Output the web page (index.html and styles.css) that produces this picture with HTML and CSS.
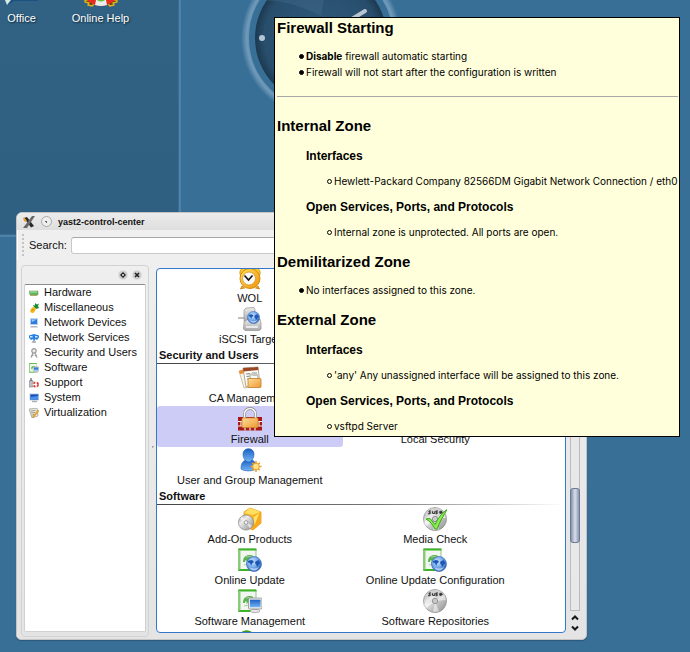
FILE: index.html
```html
<!DOCTYPE html>
<html lang="en">
<head>
<meta charset="utf-8">
<title>yast2-control-center</title>
<link rel="stylesheet" href="styles.css">
</head>
<body>
<svg class="defs" aria-hidden="true">
  <defs>
    <linearGradient id="gold" x1="0" y1="0" x2="1" y2="1"><stop offset="0" stop-color="#ffe25a"/><stop offset="1" stop-color="#f0900c"/></linearGradient>
    <linearGradient id="lockg" x1="0" y1="0" x2="1" y2="1"><stop offset="0" stop-color="#ffdc9c"/><stop offset="1" stop-color="#ee9a30"/></linearGradient>
    <linearGradient id="blue" x1="0" y1="0" x2="0" y2="1"><stop offset="0" stop-color="#1c62c4"/><stop offset="1" stop-color="#74b4f8"/></linearGradient>
    <radialGradient id="globe" cx=".4" cy=".35" r=".7"><stop offset="0" stop-color="#d4e8fc"/><stop offset=".5" stop-color="#78acec"/><stop offset="1" stop-color="#2458ac"/></radialGradient>
    <linearGradient id="disc" x1="0" y1="0" x2="1" y2="1"><stop offset="0" stop-color="#989898"/><stop offset=".35" stop-color="#ececec"/><stop offset=".6" stop-color="#c4c4c4"/><stop offset="1" stop-color="#8c8c8c"/></linearGradient>
    <linearGradient id="grey" x1="0" y1="0" x2="0" y2="1"><stop offset="0" stop-color="#ececec"/><stop offset="1" stop-color="#a8a8a8"/></linearGradient>
    <symbol id="i-globe" viewBox="0 0 16 16"><circle cx="8" cy="8" r="7.500" fill="url(#globe)" stroke="#3c6cb8" stroke-width=".7"/><path d="M2 5l3-1 2 .5 1 1.500-2 1.500-.5 2-1-1L4 7 2 6.500zM9.500 5.500l3-1.500 2 3-2 2-1 2-1.500-2.500-1-1.500z" fill="#1c58b4"/><path d="M3 11q5 3 10 0-2 3.500-5 3.500T3 11z" fill="#cce4fc" opacity=".8"/></symbol>
    <symbol id="i-clock" viewBox="0 0 24 24"><path d="M4 20l-1.500 3 4-1zM20 20l1.500 3-4-1z" fill="#f0a418" stroke="#b87408" stroke-width=".7"/><path d="M2 8c-1-5 4-8 8-5L3 10zM22 8c1-5-4-8-8-5l7 7z" fill="#ffc828" stroke="#c88410" stroke-width=".8"/><circle cx="12" cy="12.500" r="10" fill="url(#gold)" stroke="#d08c10"/><circle cx="11" cy="12.500" r="6.500" fill="#fafafa" stroke="#d89420" stroke-width=".8"/><path d="M6.500 9.500l4 4.500 4-4.500" fill="none" stroke="#181818" stroke-width="1.700"/></symbol>
    <symbol id="i-iscsi" viewBox="0 0 24 24"><path d="M0 11h7" stroke="#a8a8a8" stroke-width="1.300"/><path d="M8 1l8-.5 1 2-1 12H6V3z" fill="url(#grey)" stroke="#969696" stroke-width=".7"/><path d="M6 15l4-3h12l1 4v6l-2 1.500H7L5.500 22z" fill="url(#grey)" stroke="#909090" stroke-width=".7"/><path d="M8 20h12" stroke="#f8f8f8" stroke-width="1.500"/><use href="#i-globe" x="9" y="4" width="13" height="13"/></symbol>
    <symbol id="i-ca" viewBox="0 0 24 24"><path d="M1 5l7-2 4 18-6 1z" fill="#f8f4e8" stroke="#bca880" stroke-width=".7"/><path d="M1 5l6-2 1 4-6 1z" fill="#f08c2c"/><path d="M5 2l15-1 2 17-14 3z" fill="#fcfcf6" stroke="#988878" stroke-width=".7"/><path d="M5 2l15-1 .4 3L5.500 5.500z" fill="#9c4824"/><path d="M8 8l4-.4M8.500 10.500l4-.4M14 7h5M14.500 9h5M9 13h4" stroke="#8c8c8c" stroke-width="1.200"/><path d="M12 13V9.500q4-4 8 0V13" fill="none" stroke="#c8c8c0" stroke-width="2"/><rect x="10" y="12.500" width="13" height="9" rx="1" fill="url(#lockg)" stroke="#c47c20" stroke-width=".8"/></symbol>
    <symbol id="i-firewall" viewBox="0 0 24 24"><path d="M0 10h24v13.500H0z" fill="#a81818"/><path d="M0 14.500h24M0 19h24M7 10v4.500M17 10v4.500M3 14.500V19M21 14.500V19M7 19v4.500M12 19v4.500M17 19v4.500" stroke="#f4ecec" stroke-width="1.200"/><path d="M6.500 12V7a5.500 5.500 0 0 1 11 0v5" fill="none" stroke="#888" stroke-width="3"/><path d="M6.500 12V7a5.500 5.500 0 0 1 11 0v5" fill="none" stroke="#f4f4f4" stroke-width="1.600"/><rect x="4" y="11" width="16" height="9.500" rx="1" fill="url(#lockg)" stroke="#d08828" stroke-width=".8"/></symbol>
    <symbol id="i-user" viewBox="0 0 24 24"><path d="M3 21c0-6 2-8 5-9h6c3 1 4 4 4 9-3 2.500-12 2.500-15 0z" fill="url(#blue)" stroke="#1c5cb4" stroke-width=".6"/><path d="M5 6c0-7 11-7 11 0 0 4-2.500 8-5.500 8S5 10 5 6z" fill="url(#blue)" stroke="#1c5cb4" stroke-width=".6"/><path d="M18 13v11M12.500 18.500h11M14.200 14.700l7.600 7.600M21.800 14.700l-7.600 7.600" stroke="#f09c20" stroke-width="1.500"/><circle cx="18" cy="18.500" r="3.300" fill="#ffe488" stroke="#f0a028"/></symbol>
    <symbol id="i-addon" viewBox="0 0 24 24"><path d="M12 1l11 4v11l-8 7-9-4V5z" fill="#ffb420" stroke="#d88c08" stroke-width=".7"/><path d="M12 1l11 4-8 3-9-2z" fill="#ffe060"/><path d="M15 8l8-3v11l-8 7z" fill="#f8a818"/><path d="M15.500 10l6-4-5 12z" fill="#ffe668"/><circle cx="8" cy="15.500" r="7.600" fill="url(#disc)" stroke="#888" stroke-width=".7"/><path d="M8 15.500L2 12l2-3zM8 15.500l6 3-2 3z" fill="#fff" opacity=".6"/><circle cx="8" cy="15.500" r="1.800" fill="#f8f8f8" stroke="#888" stroke-width=".8"/></symbol>
    <symbol id="i-box" viewBox="0 0 24 24"><path d="M.5 1h17.500v21.500H.5z" fill="#f2f6f0" stroke="#78b868" stroke-width=".8"/><path d="M.5.5h18v2H.5zM.5 21h18v2H.5z" fill="#3cb428"/><path d="M.5 2.500h2v19h-2z" fill="#88cc70"/><path d="M5 14c0-7 5-7 9-7l2 3-1 3-3-1c-2 0-2 3-4 3 2-3-1-4-1-1z" fill="#58b450"/><path d="M6 17l9-2M8 9l6-1" stroke="#a4d09c"/></symbol>
    <symbol id="i-update" viewBox="0 0 24 24"><use href="#i-box" width="24" height="24"/><use href="#i-globe" x="8" y="8" width="16" height="16"/></symbol>
    <symbol id="i-software" viewBox="0 0 24 24"><use href="#i-box" width="24" height="24"/><ellipse cx="17" cy="22" rx="5" ry="1.600" fill="#e8e8e8" stroke="#888" stroke-width=".6"/><rect x="10.500" y="9" width="13.500" height="11" rx="1" fill="#e8e8e8" stroke="#888" stroke-width=".7"/><rect x="12" y="10.700" width="10.500" height="7.500" fill="url(#blue)"/></symbol>
    <symbol id="i-disc" viewBox="0 0 24 24"><circle cx="12" cy="12" r="11.500" fill="url(#disc)" stroke="#8a8a8a" stroke-width=".7"/><path d="M12 12L3 19.500A11 11 0 0 1 1 15zM12 12l9-7 2 6zM12 12l4 10.500-6 .5z" fill="#fff" opacity=".5"/><path d="M2 7a11.300 11.300 0 0 1 20 0z" fill="#d0d0d0"/><circle cx="12" cy="12" r="2.600" fill="#ddd" stroke="#777" stroke-width=".8"/><circle cx="12" cy="12" r="1" fill="#fff" stroke="#888" stroke-width=".5"/><path d="M8 4H6.500q-1 .9 0 1.200 1.500.6 0 1.500H5M9.500 4.300v1.500q.7 1.500 2.300 0V4.300M15 4h-1.500q-1 .9 0 1.200 1.500.6 0 1.500h-1M16.500 5.500H19q-.8-1.800-2-1-1 2 1.500 2.200" fill="none" stroke="#333" stroke-width="1.100"/></symbol>
    <symbol id="i-check" viewBox="0 0 24 24"><use href="#i-disc" width="24" height="24"/><path d="M3 12l4-.5 5 6C15 11 19 6 24 2.500 21 8 17 14 14 22h-2C10 18 7 14 3 12z" fill="#8cec50" stroke="#38a818"/></symbol>
    <symbol id="s-hardware" viewBox="0 0 10 10"><path d="M0 3h9v4H1z" fill="#58b858" stroke="#8c9c8c" stroke-width=".6"/><path d="M1 3.500h7v1H1z" fill="#b8e8a8"/><path d="M1 7h7v1H1z" fill="#b8a868"/></symbol>
    <symbol id="s-misc" viewBox="0 0 10 10"><path d="M5 4l-1-2 2 .5L6 0l2 1.500 2-1L9 3l1 2-3 1z" fill="#188c30"/><ellipse cx="4" cy="7" rx="2.300" ry="3.200" transform="rotate(35 4 7)" fill="#f4b818"/><path d="M2.500 7.500l2-1" stroke="#a86c08" stroke-width=".7"/></symbol>
    <symbol id="s-device" viewBox="0 0 10 10"><rect x="1.500" y=".8" width="7" height="5.700" fill="#2c7ce0" stroke="#b8d0ec"/><path d="M2 8h6l1 1.500H1z" fill="#b0b8c4"/><path d="M2.500 1.500h5L3 4z" fill="#9cc8f8"/></symbol>
    <symbol id="s-services" viewBox="0 0 10 10"><path d="M0 2.500L5 1l5 1.500v2L8 7l-2-1-1 4-1-4-2 1-2-2.500z" fill="#2880e4"/><path d="M1 3h2.500v1.500H1zM6 3h2.500v1.500H6z" fill="#cce4fc"/><path d="M3 9h4" stroke="#a8a8a8" stroke-width="1.500"/></symbol>
    <symbol id="s-security" viewBox="0 0 10 10"><circle cx="5" cy="2.800" r="2.200" fill="#eee" stroke="#989898" stroke-width="1.200"/><path d="M4 5L2 9.500M6 5l2 4.500M3 7l1.500.5M7 7l-1 1" stroke="#a0a0a0" stroke-width="1.400"/></symbol>
    <symbol id="s-support" viewBox="0 0 10 10"><path d="M0 3l3-1 1 1v6H0z" fill="#b8bcc4" stroke="#7c8088" stroke-width=".6"/><path d="M2 0v3" stroke="#444"/><circle cx="6.800" cy="6.500" r="2.300" fill="none" stroke="#eee" stroke-width="1.800"/><circle cx="6.800" cy="6.500" r="2.300" fill="none" stroke="#e03c28" stroke-width="1.800" stroke-dasharray="2 1.600"/></symbol>
    <symbol id="s-system" viewBox="0 0 10 10"><rect x="1" y="1" width="8.500" height="6" fill="#1450b8" stroke="#a8c0e4" stroke-width=".8"/><path d="M1.500 4l7.500-1v3.500H1.500z" fill="#4c90ec"/><path d="M3 8.500h5" stroke="#b0b0b0" stroke-width="1.500"/></symbol>
    <symbol id="s-virtual" viewBox="0 0 10 10"><path d="M0 1l8-1 1 8-6 2z" fill="#ececdc" stroke="#888" stroke-width=".6"/><path d="M1.500 3l5-.6M2 5l4-.6M2.500 7l3-.5" stroke="#777" stroke-width=".7"/><path d="M4 8l5-6 1 1-5 6-1.500.4z" fill="#f4b020" stroke="#b47808" stroke-width=".4"/></symbol>
    <symbol id="s-x" viewBox="0 0 12 12"><path d="M1 2l3-1 7 9-3 1.500z" fill="#282828"/><path d="M9 0h3L4 12H0z" fill="#686868"/><path d="M1 1l3 4-2 1-2-3z" fill="#e89838"/></symbol>
  </defs>
</svg>

<main class="desktop">
  <section class="folder" aria-label="Desktop folder">
    <a class="shortcut" href="#office">
      <svg viewBox="0 0 40 8"><path d="M8 0h28v1H12L6 5 5 2z" fill="#1c5280"/><path d="M3 0h6L5 5z" fill="#d8e8e4"/></svg>
      <span>Office</span>
    </a>
    <a class="shortcut" href="#help">
      <svg viewBox="0 0 40 8"><path d="M4 0h7l2 4-2 2-4-1 1-2-4-1zM36 0h-7l-2 4 2 2 4-1-1-2 4-1z" fill="#584c10" stroke="#e4b818" stroke-width="1.300"/><path d="M6 0h28Q30 5 20 6 10 5 6 0z" fill="#e82c20"/><path d="M15 0h10l1 5q-6 2-12 0z" fill="#ececec"/><path d="M16 0h8q-4 3-8 0z" fill="#68c030"/></svg>
      <span>Online Help</span>
    </a>
  </section>

  <svg class="clock" viewBox="0 0 160 160" aria-hidden="true">
    <defs>
      <radialGradient id="ring" gradientUnits="userSpaceOnUse" cx="80" cy="80" r="80">
        <stop offset=".9" stop-color="#6690b2"/><stop offset=".93" stop-color="#7099b9"/><stop offset="1" stop-color="#386f97"/>
      </radialGradient>
      <radialGradient id="face"><stop offset="0" stop-color="#2f5a7c"/><stop offset=".86" stop-color="#284e6c"/><stop offset="1" stop-color="#1c3950"/></radialGradient>
      <clipPath id="dial"><circle cx="80" cy="80" r="66"/></clipPath>
    </defs>
    <circle cx="80" cy="80" r="76" fill="#386f97" stroke="url(#ring)" stroke-width="8"/>
    <circle cx="80" cy="80" r="66" fill="url(#face)"/>
    <path d="M10 44q30-6 70 14l10-58H10z" fill="#4d7594" opacity=".3" clip-path="url(#dial)"/>
    <circle cx="21" cy="80" r="3" fill="#b4c6d6"/>
    <path d="M80 80l44-27" stroke="#b8c4d0" stroke-width="4" stroke-linecap="round"/>
  </svg>

  <section class="window" aria-label="yast2-control-center">
    <header class="titlebar">
      <svg class="app-icon" aria-hidden="true"><use href="#s-x"/></svg>
      <button class="pin" aria-label="On all desktops"></button>
      <h1>yast2-control-center</h1>
    </header>
    <div class="toolbar">
      <span class="grip"></span>
      <label for="search">Search:</label>
      <input id="search" type="text">
    </div>
    <div class="content">
      <aside class="dock">
        <div class="dock-head">
          <button aria-label="Float"><svg viewBox="0 0 8 8"><path d="M4 1L1 4l3 3 3-3z" fill="#222"/><circle cx="4" cy="4" r="1" fill="#eee"/></svg></button>
          <button aria-label="Close"><svg viewBox="0 0 8 8"><path d="M2 2l4 4M6 2L2 6" stroke="#222" stroke-width="1.600"/></svg></button>
        </div>
        <ul class="groups">
          <li><svg><use href="#s-hardware"/></svg>Hardware</li>
          <li><svg><use href="#s-misc"/></svg>Miscellaneous</li>
          <li><svg><use href="#s-device"/></svg>Network Devices</li>
          <li><svg><use href="#s-services"/></svg>Network Services</li>
          <li><svg><use href="#s-security"/></svg>Security and Users</li>
          <li><svg><use href="#i-software"/></svg>Software</li>
          <li><svg><use href="#s-support"/></svg>Support</li>
          <li><svg><use href="#s-system"/></svg>System</li>
          <li><svg><use href="#s-virtual"/></svg>Virtualization</li>
        </ul>
      </aside>
      <div class="splitter"></div>
      <div class="modules">
        <div class="modules-scroll">
          <div class="grid">
            <a class="item first" href="#wol"><svg><use href="#i-clock"/></svg>WOL</a>
            <a class="item first" href="#iscsi"><svg><use href="#i-iscsi"/></svg>iSCSI Target</a>
          </div>
          <h2>Security and Users</h2>
          <div class="grid">
            <a class="item first" href="#ca"><svg><use href="#i-ca"/></svg>CA Management</a>
            <a class="item first selected" href="#firewall"><svg><use href="#i-firewall"/></svg>Firewall</a>
            <a class="item" href="#local"><svg><use href="#i-firewall"/></svg>Local Security</a>
            <a class="item first" href="#users"><svg><use href="#i-user"/></svg>User and Group Management</a>
          </div>
          <h2>Software</h2>
          <div class="grid">
            <a class="item" href="#addon"><svg><use href="#i-addon"/></svg>Add-On Products</a>
            <a class="item" href="#media"><svg><use href="#i-check"/></svg>Media Check</a>
            <a class="item" href="#update"><svg><use href="#i-update"/></svg>Online Update</a>
            <a class="item" href="#updateconf"><svg><use href="#i-update"/></svg>Online Update Configuration</a>
            <a class="item" href="#swman"><svg><use href="#i-software"/></svg>Software Management</a>
            <a class="item" href="#repos"><svg><use href="#i-disc"/></svg>Software Repositories</a>
            <span class="item" aria-hidden="true"><svg viewBox="0 0 24 24"><path d="M2 3q6-5 12-1l2 4H2z" fill="#3c9c20"/></svg></span>
          </div>
        </div>
      </div>
      <div class="scroll">
        <div class="track"><div class="thumb"></div></div>
        <button aria-label="Scroll up"><svg viewBox="0 0 8 6"><path d="M1 4.500L4 1.500l3 3" fill="none" stroke="#181818" stroke-width="2"/></svg></button>
        <button aria-label="Scroll down"><svg viewBox="0 0 8 6"><path d="M1 1.500l3 3 3-3" fill="none" stroke="#181818" stroke-width="2"/></svg></button>
      </div>
    </div>
  </section>

  <section class="summary" role="tooltip">
    <h2>Firewall Starting</h2>
    <ul class="dots">
      <li><span><b>Disable</b> firewall automatic starting</span></li>
      <li>Firewall will not start after the configuration is written</li>
    </ul>
    <hr>
    <h2>Internal Zone</h2>
    <h3>Interfaces</h3>
    <ul class="rings"><li>Hewlett-Packard Company 82566DM Gigabit Network Connection / eth0</li></ul>
    <h3>Open Services, Ports, and Protocols</h3>
    <ul class="rings"><li>Internal zone is unprotected. All ports are open.</li></ul>
    <h2>Demilitarized Zone</h2>
    <ul class="dots"><li>No interfaces assigned to this zone.</li></ul>
    <h2>External Zone</h2>
    <h3>Interfaces</h3>
    <ul class="rings"><li>'any' Any unassigned interface will be assigned to this zone.</li></ul>
    <h3>Open Services, Ports, and Protocols</h3>
    <ul class="rings"><li>vsftpd Server</li></ul>
  </section>
</main>
</body>
</html>
```
FILE: styles.css
```css
*, *::before { box-sizing: border-box; }
body, h1, h2, h3, ul { margin: 0; padding: 0; }
ul { list-style: none; }
a { color: inherit; text-decoration: none; }
button { border: 0; padding: 0; background: none; }
svg { display: block; }

body {
  font: 11px/16px "Liberation Sans", Arial, sans-serif;
  color: #111;
}

.defs { position: absolute; width: 0; height: 0; }

.desktop {
  position: relative;
  min-height: 100vh;
  overflow: hidden;
  background: #386f97;
}

.folder {
  display: flex;
  width: 181px;
  height: 237px;
  background: linear-gradient(#316284, #2f6082);
  border-right: 2px solid #4d82a9;
  border-bottom: 2px solid #4d82a9;
  box-shadow: inset -1px -1px #3a6d91;
}
.shortcut {
  display: flex;
  flex-direction: column;
  align-items: center;
  width: 79px;
  height: 28px;
  color: #fff;
  text-shadow: 1px 1px 2px #0c2434;
}
.shortcut:first-child { width: 43px; }
.shortcut:last-child { width: 115px; }
.shortcut svg { width: 40px; height: 8px; margin-bottom: 2px; }

.clock {
  position: absolute;
  left: 241px;
  top: -42px;
  width: 160px;
  height: 160px;
}

.window {
  position: absolute;
  inset: 212px 103px 12px 16px;
  display: flex;
  flex-direction: column;
  background: #efefef;
  border: 1px solid #c4c4c4;
  border-radius: 6px 6px 5px 5px;
  box-shadow: inset 1px 1px #fff, inset -2px -2px #d2d2d2, 0 1px 1px #2c587a;
}
.titlebar {
  display: flex;
  align-items: center;
  gap: 6px;
  height: 17px;
  padding-left: 6px;
  background: linear-gradient(#ececec, #dedede);
  border-radius: 5px 5px 0 0;
}
.titlebar h1 { font-size: 9px; }
.app-icon { width: 12px; height: 12px; }
.pin {
  width: 11px;
  height: 11px;
  border: 1px solid #a8a8a8;
  border-radius: 50%;
  background: radial-gradient(#666 1px, #eee 1px);
}
.toolbar {
  display: flex;
  align-items: center;
  height: 30px;
  padding: 0 8px 0 4px;
}
.grip {
  width: 4px;
  height: 24px;
  margin-right: 4px;
  background: radial-gradient(circle, #c4c4c4 1px, transparent 1px) 0 0 / 4px 4px;
}
.toolbar input {
  flex: 1;
  height: 17px;
  margin-left: 4px;
  border: 1px solid #c8c8c8;
  border-top-color: #a8a8a8;
  border-radius: 3px;
  background: #fff;
}
.content {
  display: flex;
  flex: 1;
  min-height: 0;
  padding: 5px 5px 2px 4px;
  background: linear-gradient(#efefef, #e4e4e4);
  border-radius: 0 0 5px 5px;
}
.dock {
  display: flex;
  flex-direction: column;
  width: 128px;
  padding: 0 2px 4px;
  border: 1px solid #d2d2d2;
  border-radius: 4px;
}
.dock-head {
  display: flex;
  justify-content: flex-end;
  align-items: center;
  gap: 6px;
  height: 18px;
  padding-right: 5px;
}
.dock-head button {
  width: 8px;
  height: 8px;
  border-radius: 50%;
  background: #ccc;
  box-shadow: 0 0 0 1px #ddd;
}
.dock-head svg { width: 8px; height: 8px; }
.groups {
  flex: 1;
  background: #fff;
  border: 1px solid #d0d0d0;
  border-top-color: #8c8c8c;
  border-radius: 2px;
}
.groups li {
  display: flex;
  align-items: center;
  gap: 5px;
  height: 15px;
  padding-left: 4px;
  line-height: 15px;
}
.groups svg { width: 10px; height: 10px; }

.splitter {
  width: 7px;
  background: radial-gradient(circle, #a8a8a8 1px, transparent 1px) 2px 180px / 3px 3px no-repeat;
}
.modules {
  flex: 1;
  min-width: 0;
  margin: 3px 0 4px;
  overflow: hidden;
  background: #fff;
  border: 1px solid #3478cc;
  border-radius: 4px;
}
.modules-scroll { margin-top: -4px; }
.modules h2 {
  height: 17px;
  margin-bottom: 1px;
  padding-left: 2px;
  font-size: 11px;
  line-height: 16px;
  background: linear-gradient(to right, #444, #777 55%, #fff) bottom / 100% 1px no-repeat;
}
.grid {
  display: grid;
  grid-template-columns: 1fr 1fr;
  padding-right: 37px;
}
.item {
  display: flex;
  flex-direction: column;
  align-items: center;
  grid-column: auto;
  height: 41px;
  padding-top: 1px;
  border-radius: 3px;
  line-height: 16px;
  white-space: nowrap;
}
.item.first { grid-column: 1; }
.item svg { width: 24px; height: 24px; }
.selected { background: #ccccf6; }

.scroll {
  display: flex;
  flex-direction: column;
  align-items: center;
  width: 11px;
  margin: 3px 1px 4px 3px;
}
.track {
  flex: 1;
  display: flex;
  flex-direction: column;
  justify-content: flex-end;
  width: 10px;
  margin-bottom: 2px;
  padding-bottom: 67px;
  background: #e8e8e8;
  border: 1px solid #bbb;
  border-top: 0;
}
.thumb {
  height: 55px;
  margin: 0 -1px;
  border: 1px solid #6c7894;
  border-radius: 3px;
  background: linear-gradient(to right, #8490ac, #d8deea 50%, #8c98b2);
}
.scroll button { width: 10px; height: 10px; }
.scroll svg { width: 8px; height: 6px; margin: 2px 1px; }

.summary {
  position: absolute;
  top: 17px;
  left: 274px;
  right: 10px;
  padding: 0 0 2px 2px;
  overflow: hidden;
  background: #ffffdc;
  border: 1px solid #000;
  color: #000;
}
.summary h2 { margin: 12px 0 10px; font-size: 15px; line-height: 20px; }
.summary h2:first-child { margin-top: 0; }
.summary h3 { margin: 10px 0 9px 29px; font-size: 12px; line-height: 16px; }
.summary h2 + h3 { margin-top: 12px; }
.summary hr { height: 1px; margin: 16px 1px 19px 0; border: 0; background: #a8a8a8; }
.summary li {
  display: flex;
  align-items: center;
  gap: 2px;
  font-family: Inter, "Liberation Sans", Arial, sans-serif;
  font-size: 10px;
  white-space: nowrap;
}
.summary li::before {
  content: "";
  flex: none;
  width: 5px;
  height: 5px;
  border: 1px solid #000;
  border-radius: 50%;
}
.dots { padding-left: 22px; }
.dots li::before { background: #000; }
.rings { padding-left: 50px; }
```
